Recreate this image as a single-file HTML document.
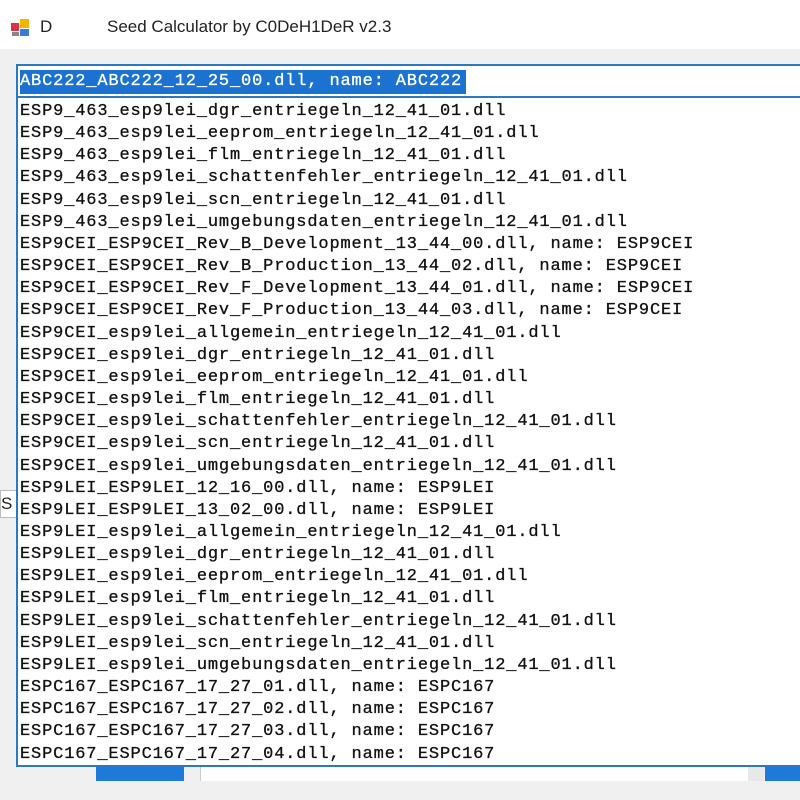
<!DOCTYPE html>
<html><head><style>
body{margin:0;width:800px;height:800px;background:#f0f0f0;position:relative;overflow:hidden;font-family:"Liberation Sans",sans-serif}
.title{position:absolute;left:0;top:0;width:800px;height:49px;background:#fff}
.t{position:absolute;top:17px;font-size:17px;color:#222}
.combo{position:absolute;left:16px;top:64px;width:800px;height:32px;background:#fff;border-top:2px solid #2b79c2;border-left:2px solid #2b79c2}
.sel{position:absolute;left:2px;top:4px;height:24px;width:446px;background:#1c72d0;color:#fff}
.mono{font-family:"Liberation Mono",monospace;font-size:17px;letter-spacing:0.85px;font-weight:normal;-webkit-text-stroke:0.3px}
.list{position:absolute;left:16px;top:96px;width:800px;height:668px;background:#fff;border-top:2px solid #2b79c2;border-left:2px solid #2b79c2;border-bottom:2px solid #2b79c2;padding-top:3px;box-sizing:border-box;height:671px}
.list div{height:22.17px;line-height:22.17px;padding-left:2px;color:#111;white-space:pre}
</style></head><body>
<div class="title">
<svg style="position:absolute;left:11px;top:19px" width="20" height="18"><rect x="0" y="4" width="8" height="8" fill="#d34"/><rect x="9" y="0" width="9" height="9" fill="#f5b400"/><rect x="9" y="10" width="9" height="7" fill="#3a7bd5"/><rect x="1" y="13" width="7" height="4" fill="#888"/></svg>
<span class="t" style="left:40px">D</span>
<span class="t" style="left:107px">Seed Calculator by C0DeH1DeR v2.3</span>
</div>
<div style="position:absolute;left:0;top:490px;width:15px;height:26px;background:#fff;border:1px solid #bbb;font-size:17px;line-height:26px;color:#222">S</div>
<div class="combo"><div class="sel mono" style="line-height:24px">ABC222_ABC222_12_25_00.dll, name: ABC222</div></div>
<div class="list mono">
<div>ESP9_463_esp9lei_dgr_entriegeln_12_41_01.dll</div>
<div>ESP9_463_esp9lei_eeprom_entriegeln_12_41_01.dll</div>
<div>ESP9_463_esp9lei_flm_entriegeln_12_41_01.dll</div>
<div>ESP9_463_esp9lei_schattenfehler_entriegeln_12_41_01.dll</div>
<div>ESP9_463_esp9lei_scn_entriegeln_12_41_01.dll</div>
<div>ESP9_463_esp9lei_umgebungsdaten_entriegeln_12_41_01.dll</div>
<div>ESP9CEI_ESP9CEI_Rev_B_Development_13_44_00.dll, name: ESP9CEI</div>
<div>ESP9CEI_ESP9CEI_Rev_B_Production_13_44_02.dll, name: ESP9CEI</div>
<div>ESP9CEI_ESP9CEI_Rev_F_Development_13_44_01.dll, name: ESP9CEI</div>
<div>ESP9CEI_ESP9CEI_Rev_F_Production_13_44_03.dll, name: ESP9CEI</div>
<div>ESP9CEI_esp9lei_allgemein_entriegeln_12_41_01.dll</div>
<div>ESP9CEI_esp9lei_dgr_entriegeln_12_41_01.dll</div>
<div>ESP9CEI_esp9lei_eeprom_entriegeln_12_41_01.dll</div>
<div>ESP9CEI_esp9lei_flm_entriegeln_12_41_01.dll</div>
<div>ESP9CEI_esp9lei_schattenfehler_entriegeln_12_41_01.dll</div>
<div>ESP9CEI_esp9lei_scn_entriegeln_12_41_01.dll</div>
<div>ESP9CEI_esp9lei_umgebungsdaten_entriegeln_12_41_01.dll</div>
<div>ESP9LEI_ESP9LEI_12_16_00.dll, name: ESP9LEI</div>
<div>ESP9LEI_ESP9LEI_13_02_00.dll, name: ESP9LEI</div>
<div>ESP9LEI_esp9lei_allgemein_entriegeln_12_41_01.dll</div>
<div>ESP9LEI_esp9lei_dgr_entriegeln_12_41_01.dll</div>
<div>ESP9LEI_esp9lei_eeprom_entriegeln_12_41_01.dll</div>
<div>ESP9LEI_esp9lei_flm_entriegeln_12_41_01.dll</div>
<div>ESP9LEI_esp9lei_schattenfehler_entriegeln_12_41_01.dll</div>
<div>ESP9LEI_esp9lei_scn_entriegeln_12_41_01.dll</div>
<div>ESP9LEI_esp9lei_umgebungsdaten_entriegeln_12_41_01.dll</div>
<div>ESPC167_ESPC167_17_27_01.dll, name: ESPC167</div>
<div>ESPC167_ESPC167_17_27_02.dll, name: ESPC167</div>
<div>ESPC167_ESPC167_17_27_03.dll, name: ESPC167</div>
<div>ESPC167_ESPC167_17_27_04.dll, name: ESPC167</div>
</div>
<div style="position:absolute;left:96px;top:767px;width:88px;height:14px;background:#1e7ad8"></div>
<div style="position:absolute;left:200px;top:767px;width:284px;height:14px;background:#fff;border-left:1px solid #ccc"></div>
<div style="position:absolute;left:484px;top:767px;width:264px;height:14px;background:#fff"></div>
<div style="position:absolute;left:748px;top:767px;width:16px;height:14px;background:#e8e8e8"></div>
<div style="position:absolute;left:765px;top:767px;width:35px;height:14px;background:#1e7ad8"></div>
</body></html>
